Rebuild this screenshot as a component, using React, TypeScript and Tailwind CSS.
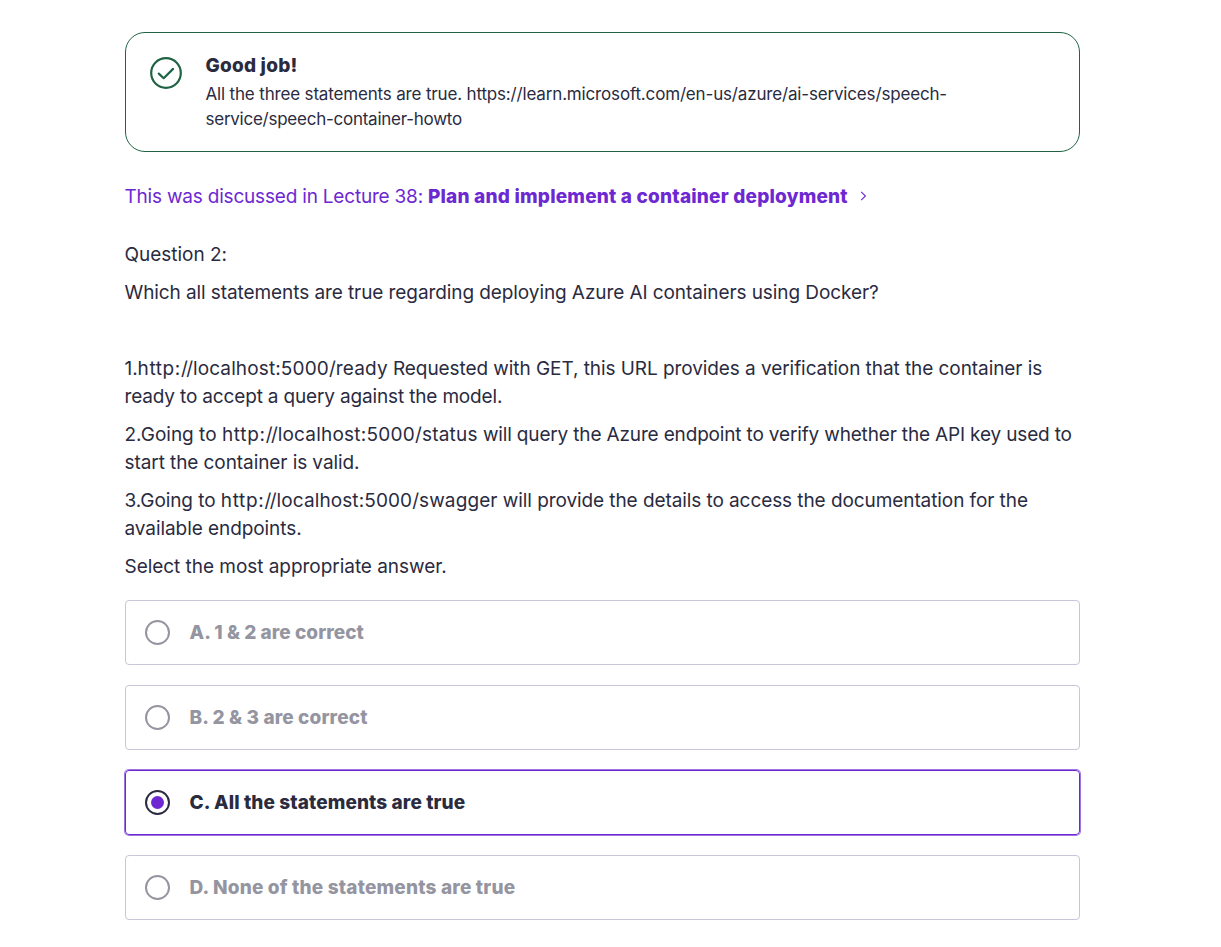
type Option = { label: string; tracking: string; selected?: boolean };

const options: Option[] = [
  { label: "A. 1 & 2 are correct", tracking: "tracking-[0.05px]" },
  { label: "B. 2 & 3 are correct", tracking: "tracking-[0.13px]" },
  { label: "C. All the statements are true", tracking: "tracking-[0.1px]", selected: true },
  { label: "D. None of the statements are true", tracking: "tracking-[0.18px]" },
];

function Alert() {
  return (
    <section className="flex h-[120px] rounded-[20px] border border-[#206344] pt-5 pl-6">
      <svg className="mt-1 size-8 shrink-0" viewBox="0 0 32 32" fill="none" stroke="#206344">
        <circle cx="16" cy="16" r="14.8" strokeWidth="2.2" />
        <path d="M8.8 16.6l4.9 4.6 9.4-9.3" strokeWidth="2.2" strokeLinecap="round" strokeLinejoin="round" />
      </svg>
      <div className="mt-px ml-[23.5px] whitespace-nowrap">
        <h2 className="mb-1 text-[19px] leading-6 font-extrabold tracking-[0.2px]">Good job!</h2>
        <p className="text-[17px] leading-[25px]">
          <span className="block tracking-[-0.165px]">
            All the three statements are true. https://learn.microsoft.com/en-us/azure/ai-services/speech-
          </span>
          <span className="block tracking-[-0.25px]">service/speech-container-howto</span>
        </p>
      </div>
    </section>
  );
}

function OptionRow({ option }: { option: Option }) {
  const selected = option.selected;
  return (
    <label
      className={`flex h-[65px] items-center rounded-[4px] border pl-[19px] ${
        selected
          ? "border-[#6d28d2] text-[#2a2b3f] shadow-[0_0_0_1px_rgba(109,40,210,0.65)]"
          : "border-[#c8c6d8] text-[#9495a0]"
      }`}
    >
      <span
        className={`flex size-[25px] items-center justify-center rounded-full border-2 ${
          selected ? "border-[#2a2b3f]" : "border-[#9495a0]"
        }`}
      >
        {selected && <span className="size-[13px] rounded-full bg-[#6d28d2]" />}
      </span>
      <span className={`ml-[19.5px] text-[19px] leading-7 font-extrabold whitespace-nowrap ${option.tracking}`}>
        {option.label}
      </span>
    </label>
  );
}

export default function App() {
  return (
    <main className="min-h-[947px] bg-white pt-8 pl-[125px] font-['Inter','Liberation_Sans',sans-serif] text-[#2a2b3f]">
      <div className="w-[955px]">
        <Alert />
        <a className="mt-[31px] -ml-[0.5px] flex h-7 items-center text-[19px] whitespace-nowrap text-[#6d28d2]">
          <span className="tracking-[-0.2px]">This was discussed in Lecture 38:</span>
          <span className="ml-[5px] font-extrabold tracking-[0.2px]">Plan and implement a container deployment</span>
          <svg className="mb-0.5 ml-[12px] h-[10px] w-[7px]" viewBox="0 0 7 10" fill="none" stroke="#6d28d2" strokeWidth="1.1">
            <path d="M1.2 0.8L5.4 5 1.2 9.2" />
          </svg>
        </a>
        <div className="mt-[30px] -ml-[0.5px] flex flex-col gap-2.5 text-[19px] leading-7 whitespace-nowrap">
          <p className="tracking-[-0.02px]">Question 2:</p>
          <p className="tracking-[-0.085px]">
            Which all statements are true regarding deploying Azure AI containers using Docker?
          </p>
          <p className="h-7" />
          <p>
            <span className="block tracking-[-0.07px]">
              1.<span className="tracking-[0.6px]">http:</span>
              <span className="tracking-[-1.6px]">/</span>/
              <span className="tracking-[0.13px]">localhost:5000/ready</span> Requested with GET, this URL provides a
              verification that the container is
            </span>
            <span className="block tracking-[-0.16px]">ready to accept a query against the model.</span>
          </p>
          <p>
            <span className="block tracking-[-0.16px]">
              <span className="tracking-[0px]">2.Going to </span>
              <span className="tracking-[0.7px]">http:</span>
              <span className="tracking-[-1.6px]">/</span>/
              <span className="tracking-[0.22px]">localhost:5000/status</span> will query the Azure endpoint to verify
              whether the API key used to
            </span>
            <span className="block tracking-[-0.08px]">start the container is valid.</span>
          </p>
          <p>
            <span className="block tracking-[-0.08px]">
              3.Going to <span className="tracking-[0.7px]">http:</span>
              <span className="tracking-[-1.6px]">/</span>/
              <span className="tracking-[0.1px]">localhost:5000/swagger</span> will provide the details to access the
              documentation for the
            </span>
            <span className="block tracking-[-0.07px]">available endpoints.</span>
          </p>
          <p className="tracking-[-0.04px]">Select the most appropriate answer.</p>
        </div>
        <div className="mt-[19px] flex flex-col gap-5">
          {options.map((option) => (
            <OptionRow key={option.label} option={option} />
          ))}
        </div>
      </div>
    </main>
  );
}
